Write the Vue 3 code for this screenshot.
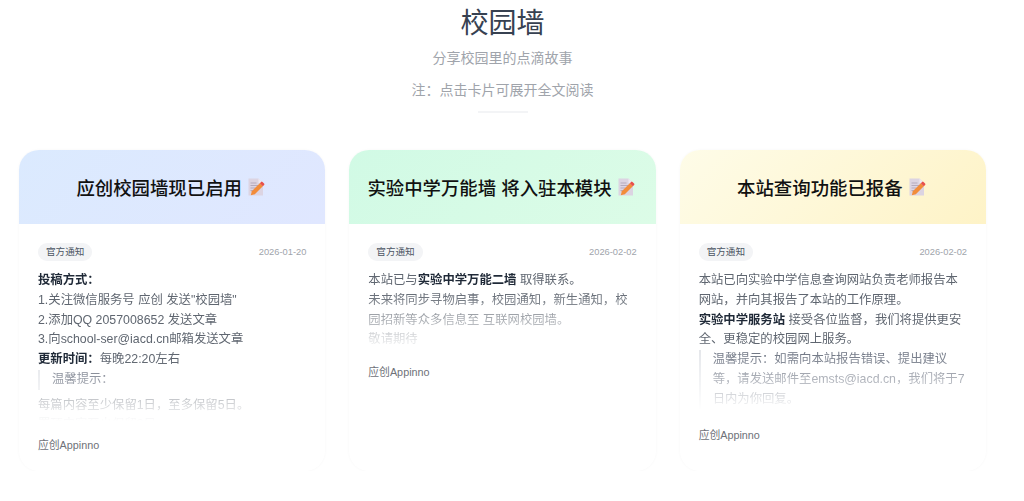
<template>
  <div class="page">
    <header class="head">
      <h1>校园墙</h1>
      <p class="sub">分享校园里的点滴故事</p>
      <p class="note">注：点击卡片可展开全文阅读</p>
      <div class="divider"></div>
    </header>

    <div class="grid">
      <article class="card" v-for="card in cards" :key="card.title">
        <div class="card-head" :class="card.tone">
          <h2>{{ card.title }}</h2>
          <svg class="memo" viewBox="0 0 18 18" width="18" height="18">
            <path d="M1.5 .5h10L16 5v12.5H1.5z" fill="#dcd4e2" />
            <path d="M11.5 .5V5H16z" fill="#eee9f1" />
            <path d="M3.5 5h6M3.5 7.5h8M3.5 10h5M3.5 12.5h3" stroke="#b5aabd" stroke-width="1" fill="none" />
            <path d="M4.8 13.2l8-8 3 3-8 8-4 1z" fill="#f28c3a" />
            <path d="M12.8 5.2l1.3-1.3a1 1 0 0 1 1.4 0l1.6 1.6a1 1 0 0 1 0 1.4L15.8 8.2z" fill="#e8504a" />
          </svg>
        </div>
        <div class="card-body">
          <div class="meta">
            <span class="tag">官方通知</span>
            <span class="date">{{ card.date }}</span>
          </div>
          <div class="content" :class="card.size">
            <template v-if="card.tone === 'blue'">
              <p><strong>投稿方式：</strong></p>
              <p>1.关注微信服务号 应创 发送"校园墙"</p>
              <p>2.添加QQ 2057008652 发送文章</p>
              <p>3.向school-ser@iacd.cn邮箱发送文章</p>
              <p><strong>更新时间：</strong>每晚22:20左右</p>
              <blockquote>温馨提示：</blockquote>
              <p>每篇内容至少保留1日，至多保留5日。</p>
              <p>置顶内容至少保留3日。</p>
            </template>
            <template v-else-if="card.tone === 'green'">
              <p>本站已与<strong>实验中学万能二墙</strong> 取得联系。</p>
              <p>未来将同步寻物启事，校园通知，新生通知，校园招新等众多信息至 互联网校园墙。</p>
              <p>敬请期待</p>
            </template>
            <template v-else>
              <p>本站已向实验中学信息查询网站负责老师报告本网站，并向其报告了本站的工作原理。</p>
              <p><strong>实验中学服务站</strong> 接受各位监督，我们将提供更安全、更稳定的校园网上服务。</p>
              <blockquote>温馨提示：如需向本站报告错误、提出建议等，请发送邮件至emsts@iacd.cn，我们将于7日内为你回复。</blockquote>
            </template>
          </div>
          <div class="author">应创Appinno</div>
        </div>
      </article>
    </div>
  </div>
</template>

<script setup>
const cards = [
  { title: '应创校园墙现已启用', date: '2026-01-20', tone: 'blue', size: 'tall' },
  { title: '实验中学万能墙 将入驻本模块', date: '2026-02-02', tone: 'green', size: 'short' },
  { title: '本站查询功能已报备', date: '2026-02-02', tone: 'yellow', size: 'mid' }
]
</script>

<style>
html, body {
  margin: 0;
  background: #fff;
  overflow: hidden;
}
</style>

<style scoped>
.page {
  width: 967px;
  padding: 0 38px 0 19px;
  font-family: "Liberation Sans", "Noto Sans CJK SC", sans-serif;
}

.head {
  text-align: center;
  height: 150px;
  padding-top: 6px;
  box-sizing: border-box;
}

h1 {
  margin: 0;
  font-size: 28px;
  line-height: 36px;
  font-weight: 400;
  color: #374151;
}

.sub {
  margin: 7px 0 0;
  font-size: 14px;
  line-height: 18px;
  color: #a0a4ab;
}

.note {
  margin: 14px 0 0;
  font-size: 14px;
  line-height: 18px;
  color: #a0a4ab;
}

.divider {
  width: 50px;
  height: 2px;
  margin: 12px auto 0;
  background: #f3f4f6;
}

.grid {
  display: grid;
  grid-template-columns: repeat(3, 1fr);
  gap: 24px;
}

.card {
  height: 321px;
  border-radius: 20px;
  overflow: hidden;
  box-shadow: 0 0 3px rgba(0, 0, 0, 0.035);
  background: #fff;
}

.card-head {
  height: 74px;
  display: flex;
  align-items: center;
  justify-content: center;
  gap: 5px;
}

.card-head.blue { background: linear-gradient(135deg, #dbeafe, #e0e7ff); }
.card-head.green { background: linear-gradient(135deg, #d1fae5, #dcfce7); }
.card-head.yellow { background: linear-gradient(135deg, #fefce8, #fef3c7); }

h2 {
  margin: 0;
  font-size: 18.4px;
  font-weight: 500;
  color: #111;
}

.memo {
  flex: none;
  margin-right: 3px;
}

.card-body {
  padding: 19px 19px 0;
}

.meta {
  display: flex;
  justify-content: space-between;
  align-items: center;
  height: 18px;
}

.tag {
  padding: 0 8px;
  height: 18px;
  line-height: 18px;
  font-size: 9.6px;
  border-radius: 9px;
  background: #f3f4f6;
  color: #4b5563;
}

.date {
  font-size: 9.3px;
  color: #a0a4ab;
}

.content {
  margin-top: 10px;
  font-size: 12.35px;
  line-height: 19.76px;
  color: #5f6670;
  overflow: hidden;
  -webkit-mask-image: linear-gradient(to bottom, #000 calc(100% - 60px), transparent 100%);
  mask-image: linear-gradient(to bottom, #000 calc(100% - 60px), transparent 100%);
}

.content.tall { height: 150px; }
.content.short { height: 80px; }
.content.mid { height: 140px; }

.content p {
  margin: 0;
}

.content strong {
  color: #1f2937;
  font-weight: 700;
}

blockquote {
  margin: 0 0 6px;
  padding-left: 12px;
  border-left: 2px solid #e5e7eb;
  color: #6b7280;
}

.author {
  margin-top: 17px;
  font-size: 10.8px;
  line-height: 14px;
  color: #6e7178;
}

.content.short + .author {
  margin-top: 14px;
}
</style>
